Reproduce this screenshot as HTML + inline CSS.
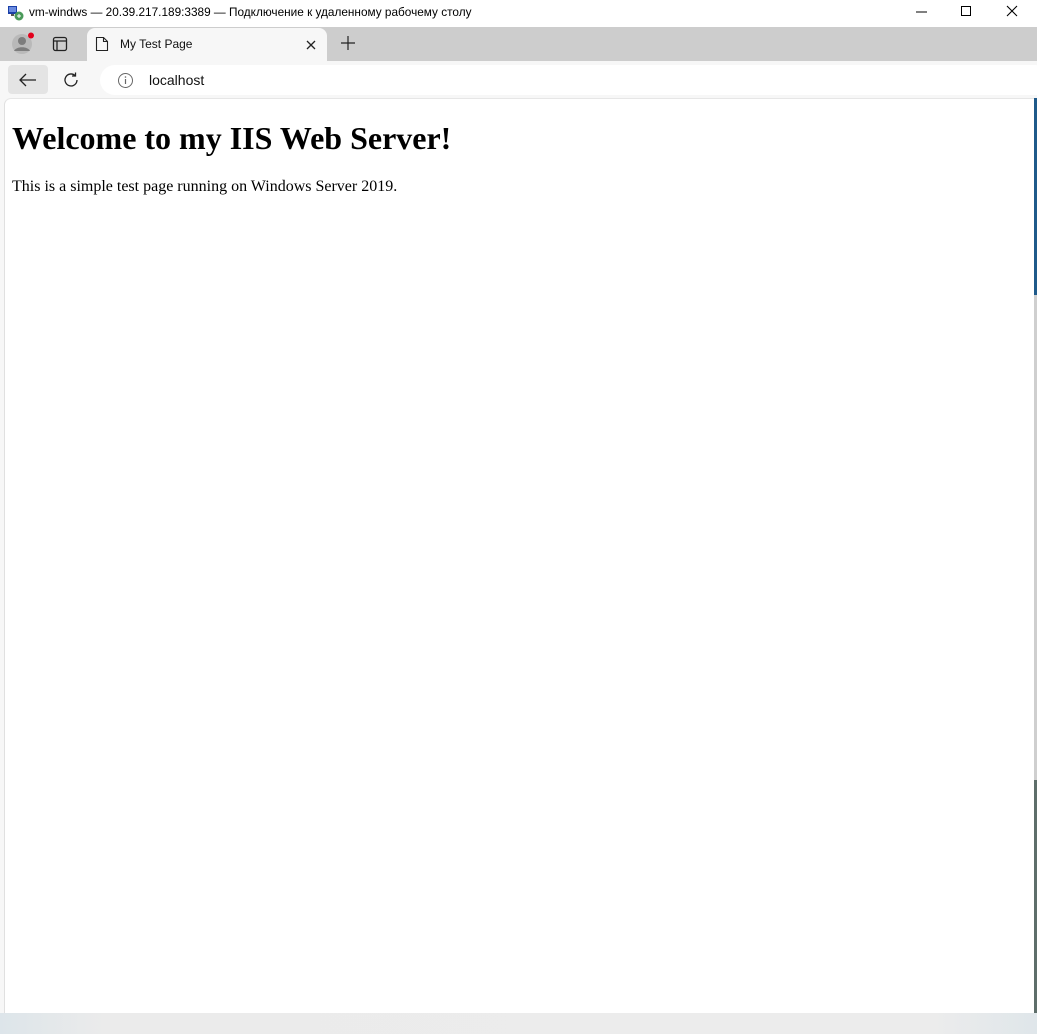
<!DOCTYPE html>
<html><head><meta charset="utf-8"><style>
*{margin:0;padding:0;box-sizing:border-box}
body{width:1037px;height:1034px;background:#fff;position:relative;overflow:hidden;font-family:"Liberation Sans",sans-serif}
.abs{position:absolute}
</style></head><body>
<div class="abs" style="left:0;top:0;width:1037px;height:27px;background:#fff"></div>
<svg class="abs" style="left:8px;top:5px" width="16" height="16" viewBox="0 0 16 16">
<rect x="0" y="1" width="9" height="8" fill="#1a3fa8"/><rect x="1" y="2" width="7" height="5" fill="#6a8be0"/>
<rect x="3" y="9" width="3" height="2" fill="#555"/>
<circle cx="11" cy="11" r="4.5" fill="#4a9a5a"/><path d="M9 11h4M11 9v4" stroke="#fff" stroke-width="1"/>
</svg>
<div class="abs" style="left:29px;top:5px;font-size:11.8px;color:#000;white-space:nowrap">vm-windws — 20.39.217.189:3389 — Подключение к удаленному рабочему столу</div>
<svg class="abs" style="left:900px;top:0" width="137" height="27" viewBox="0 0 137 27">
<path d="M16 12h11" stroke="#000" stroke-width="1"/>
<rect x="61.5" y="6.5" width="9" height="9" fill="none" stroke="#000"/>
<path d="M107 6l10 10M117 6l-10 10" stroke="#000" stroke-width="1.1"/>
</svg>
<div class="abs" style="left:0;top:27px;width:1037px;height:34px;background:#cdcdcd"></div>
<div class="abs" style="left:87px;top:28px;width:240px;height:36px;background:#f7f7f7;border-radius:8px 8px 0 0"></div>
<svg class="abs" style="left:10px;top:32px" width="26" height="24" viewBox="0 0 26 24">
<circle cx="12" cy="12" r="10" fill="#b9b9b9"/><circle cx="12" cy="9" r="4" fill="#7d7d7d"/><path d="M4 19c2-5 14-5 16 0" fill="#7d7d7d"/>
<circle cx="21" cy="3.5" r="3" fill="#e3001b"/>
</svg>
<svg class="abs" style="left:52px;top:36px" width="16" height="16" viewBox="0 0 16 16">
<rect x="1.5" y="1.5" width="13" height="13" rx="2" fill="none" stroke="#222" stroke-width="1.3"/><path d="M1.5 5h13M5 5v9.5" stroke="#222" stroke-width="1.3"/>
</svg>
<svg class="abs" style="left:95px;top:36px" width="14" height="16" viewBox="0 0 14 16">
<path d="M1.5 1.5h7l4 4v9h-11z M8.5 1.5v4h4" fill="none" stroke="#222" stroke-width="1.1"/>
</svg>
<div class="abs" style="left:120px;top:37px;font-size:12px;color:#111">My Test Page</div>
<svg class="abs" style="left:305px;top:39px" width="12" height="12" viewBox="0 0 12 12"><path d="M2 2l8 8M10 2l-8 8" stroke="#222" stroke-width="1.3"/></svg>
<svg class="abs" style="left:340px;top:35px" width="16" height="16" viewBox="0 0 16 16"><path d="M8 1v14M1 8h14" stroke="#222" stroke-width="1.2"/></svg>
<div class="abs" style="left:0;top:61px;width:1037px;height:37px;background:#f7f7f7"></div>
<div class="abs" style="left:8px;top:65px;width:40px;height:29px;background:#e4e4e4;border-radius:4px"></div>
<svg class="abs" style="left:18px;top:72px" width="20" height="16" viewBox="0 0 20 16"><path d="M18 8H2M8 2L2 8l6 6" fill="none" stroke="#222" stroke-width="1.3"/></svg>
<svg class="abs" style="left:62px;top:71px" width="18" height="18" viewBox="0 0 18 18"><path d="M15 9a6 6 0 1 1-2-4.5M13.5 1.5v3.5H10" fill="none" stroke="#222" stroke-width="1.3"/></svg>
<div class="abs" style="left:100px;top:65px;width:950px;height:30px;background:#fff;border-radius:15px"></div>
<svg class="abs" style="left:117px;top:72px" width="17" height="17" viewBox="0 0 17 17"><circle cx="8.5" cy="8.5" r="7" fill="none" stroke="#666" stroke-width="1"/><path d="M8.5 7v5" stroke="#666" stroke-width="1.2"/><circle cx="8.5" cy="5" r=".8" fill="#666"/></svg>
<div class="abs" style="left:149px;top:72px;font-size:14px;color:#111">localhost</div>
<div class="abs" style="left:0;top:98px;width:1037px;height:916px;background:#f7f7f7"></div>
<div class="abs" style="left:4px;top:98px;width:1031px;height:915px;background:#fff;border-left:1px solid #e0e0e0;border-top:1px solid #e6e6e6;border-radius:7px 0 0 0"></div>
<div class="abs" style="left:1034px;top:98px;width:3px;height:197px;background:#1f5a8a"></div>
<div class="abs" style="left:1034px;top:295px;width:3px;height:485px;background:#cfcfcf"></div>
<div class="abs" style="left:1034px;top:780px;width:3px;height:233px;background:#5e6e6a"></div>
<div class="abs" style="left:0;top:1013px;width:1037px;height:21px;background:linear-gradient(90deg,#dde5ea,#ebebeb 10%,#ececec 90%,#dfe6ea)"></div>
<div class="abs" style="left:12px;top:120px;font-family:'Liberation Serif',serif;font-weight:bold;font-size:32px;color:#000;white-space:nowrap">Welcome to my IIS Web Server!</div>
<div class="abs" style="left:12px;top:178px;font-family:'Liberation Serif',serif;font-size:16px;color:#000;white-space:nowrap">This is a simple test page running on Windows Server 2019.</div>
</body></html>
